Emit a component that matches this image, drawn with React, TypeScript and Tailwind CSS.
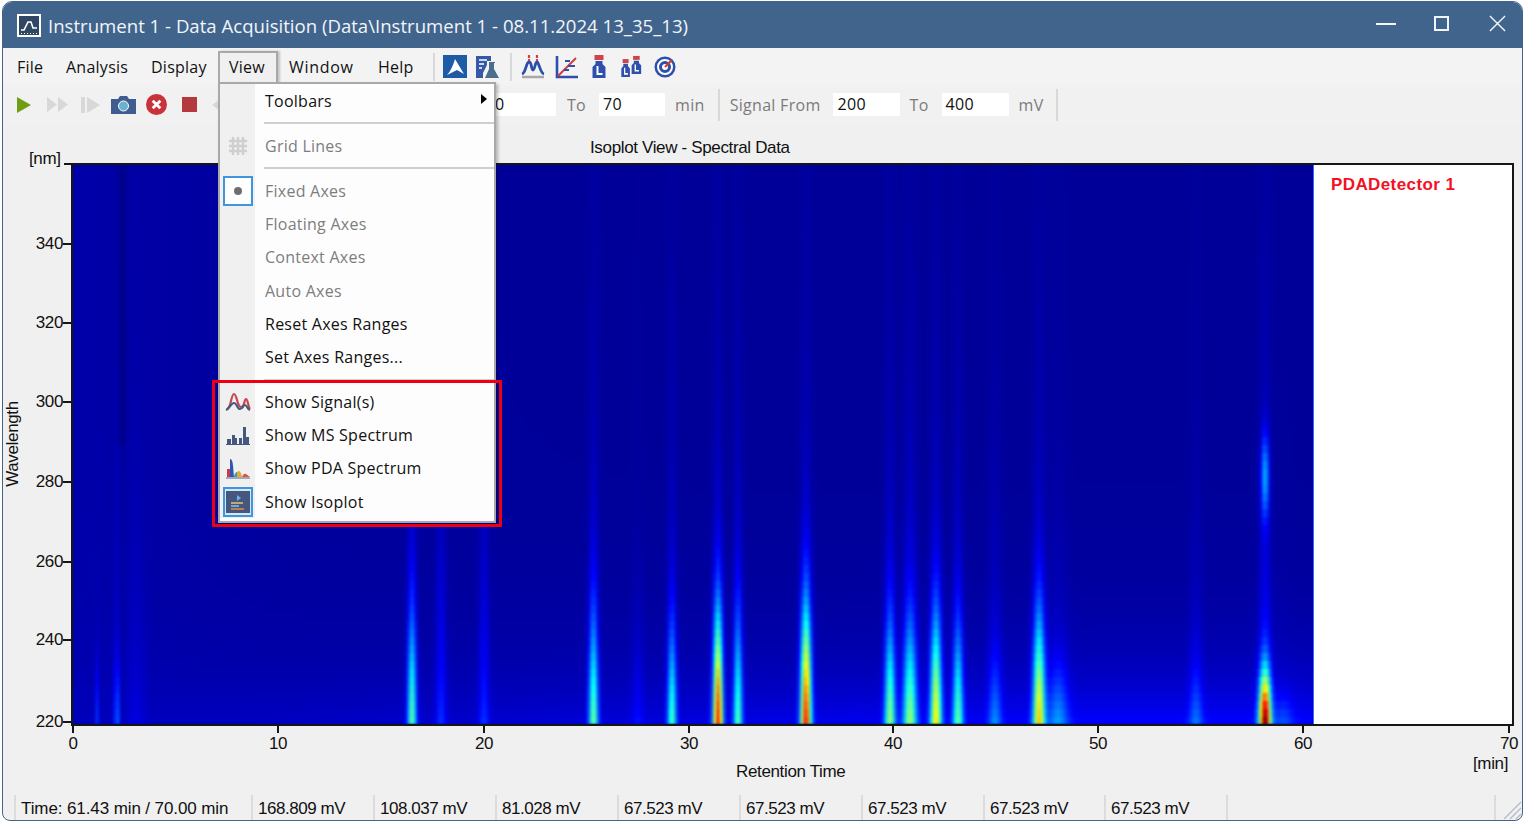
import { Fragment, type ReactNode } from "react";

// jet colour map, same as the isoplot uses
function jet(v: number) {
  const c = (n: number) => Math.round(Math.max(0, Math.min(1, n)) * 255);
  const r = c(Math.min(4 * v - 1.5, -4 * v + 4.5));
  const g = c(Math.min(4 * v - 0.5, -4 * v + 3.5));
  const b = c(Math.min(4 * v + 0.5, -4 * v + 2.5));
  return `rgb(${r},${g},${b})`;
}

const W = 1240;
const H = 559;
const ROW = 8;
const STEP = 3;

// x in page px, s = width, a = amplitude at 220 nm, h = vertical falloff, t = tail share
const peaks = [
  { x: 97, s: 1.2, a: 0.11, h: 60, t: 0.1 },
  { x: 117, s: 2, a: 0.17, h: 60, t: 0.3 },
  { x: 136, s: 7, a: 0.035, h: 200, t: 0.6 },
  { x: 412, s: 3, a: 0.41, h: 112, t: 0.3 },
  { x: 441, s: 3.5, a: 0.1, h: 200, t: 0.5 },
  { x: 484, s: 3.5, a: 0.1, h: 200, t: 0.6 },
  { x: 593.5, s: 3.2, a: 0.41, h: 112, t: 0.3 },
  { x: 638, s: 4, a: 0.05, h: 120, t: 0.3 },
  { x: 672, s: 3, a: 0.37, h: 96, t: 0.3 },
  { x: 718, s: 3.2, a: 0.78, h: 108, t: 0.17 },
  { x: 738, s: 3, a: 0.38, h: 110, t: 0.3 },
  { x: 806, s: 3.6, a: 0.78, h: 112, t: 0.17 },
  { x: 890, s: 3.6, a: 0.43, h: 100, t: 0.28 },
  { x: 910, s: 4.6, a: 0.43, h: 100, t: 0.28 },
  { x: 936, s: 3.8, a: 0.55, h: 106, t: 0.22 },
  { x: 958, s: 3.4, a: 0.38, h: 96, t: 0.28 },
  { x: 995, s: 4.5, a: 0.15, h: 70, t: 0.4 },
  { x: 1039, s: 4, a: 0.57, h: 106, t: 0.2 },
  { x: 1058, s: 7, a: 0.16, h: 60, t: 0.25 },
  { x: 1196, s: 4.5, a: 0.12, h: 60, t: 0.4 },
  { x: 1265, s: 4, a: 0.92, h: 50, t: 0.15 },
  { x: 1283, s: 7, a: 0.08, h: 30, t: 0.1 },
];

function intensity(px: number, y: number) {
  const d = H - y;
  const lr = Math.min(1, (px - 73) / 1000);
  let v = 0.024 + (0.02 + 0.085 * lr) * Math.exp(-d / 55);
  v += 0.018 * Math.exp(-(px - 73) / 170);
  // dark stripe at the start of the run
  v -= 0.03 * Math.exp(-((px - 122) ** 2) / 18) * (y > 280 ? 0.3 : 1);
  for (const p of peaks) {
    const g = Math.exp(-((px - p.x) ** 2) / (2 * p.s * p.s));
    if (g < 0.002) continue;
    v += p.a * g * ((1 - p.t) * Math.exp(-((d / p.h) ** 2)) + p.t * Math.exp(-d / 200));
  }
  // second band of the last peak, higher up
  const g2 = Math.exp(-((px - 1265) ** 2) / 14);
  v += 0.25 * g2 * Math.exp(-(((y + 166 - 478) / 42) ** 2));
  return v;
}

const rows = Array.from({ length: Math.ceil(H / ROW) }, (_, r) => {
  const y = r * ROW + ROW / 2;
  const stops = [];
  for (let i = 0; i <= W / STEP; i++) {
    stops.push({ o: (i * STEP) / W, c: jet(intensity(73 + i * STEP, y)) });
  }
  return { y: r * ROW, stops };
});

function Heatmap() {
  return (
    <svg width={W} height={H} viewBox={`0 0 ${W} ${H}`} className="block shrink-0 blur-[1px]">
      <defs>
        {rows.map((row, i) => (
          <linearGradient key={i} id={`iso${i}`}>
            {row.stops.map((s, j) => (
              <stop key={j} offset={s.o} stopColor={s.c} />
            ))}
          </linearGradient>
        ))}
      </defs>
      {rows.map((row, i) => (
        <rect key={i} x={0} y={row.y} width={W} height={ROW + 0.5} fill={`url(#iso${i})`} />
      ))}
    </svg>
  );
}

/* ---------- icons ---------- */

function AppIcon() {
  return (
    <svg width="24" height="23" viewBox="0 0 24 23">
      <rect x="1" y="1" width="22" height="21" fill="#2f4763" stroke="#fff" strokeWidth="2" />
      <path d="M4 17h3l4-8h3l2 6h4" transform="translate(0 -1)" fill="none" stroke="#fff" strokeWidth="1.6" />
      <path d="M4 19.5h16" stroke="#fff" strokeWidth="1" strokeDasharray="1 2" />
    </svg>
  );
}

function LogoTool() {
  return (
    <svg width="24" height="23" viewBox="0 0 24 23">
      <rect width="24" height="23" fill="#1d5ba6" />
      <path d="M12 4l9 15-7-4-10 5c3-3 6-9 8-16z" fill="#fff" />
    </svg>
  );
}

function FlaskTool() {
  return (
    <svg width="24" height="24" viewBox="0 0 24 24">
      <path d="M0 1h15v5h-4v4l-4 8v5H0z" fill="#3558a8" />
      <path d="M3 5h8M3 9h5M3 13h3" stroke="#fff" strokeWidth="1.6" />
      <path d="M13 7h6v1h-1v6l5 9H9l4-9V8z" fill="#4d6d8c" />
    </svg>
  );
}

function PeaksTool() {
  return (
    <svg width="24" height="25" viewBox="0 0 24 25">
      <path d="M1 20c4-1 4-12 7-12s2 8 4 8 2-8 4-8 3 11 7 12" fill="none" stroke="#2a4fa8" strokeWidth="2.8" />
      <path d="M8 1v3M8 5v2M16 1v3M16 5v2" stroke="#d0403f" strokeWidth="2.2" />
      <path d="M1 23h22" stroke="#a8a8a8" strokeWidth="2.5" />
    </svg>
  );
}

function AxesTool() {
  return (
    <svg width="24" height="24" viewBox="0 0 24 24">
      <path d="M2 1v21h21" fill="none" stroke="#2c50ab" strokeWidth="2.6" />
      <path d="M3 21L21 3" stroke="#d23b3b" strokeWidth="2" />
      <path d="M10 6h5M13 11h7M9 15h5" stroke="#2c50ab" strokeWidth="1.8" />
    </svg>
  );
}

function Bottle() {
  return (
    <g>
      <rect x="2.5" y="0" width="9" height="5" fill="#cf4349" />
      <path d="M3.5 6h7v3l3 3v11H.5V12l3-3z" fill="#2c50ab" />
      <path d="M5.5 11v8h5" fill="none" stroke="#fff" strokeWidth="2" />
    </g>
  );
}

function GaugeTool() {
  return (
    <svg width="22" height="22" viewBox="0 0 22 22">
      <circle cx="11" cy="11" r="10.5" fill="#2c50ab" />
      <circle cx="11" cy="11" r="7" fill="none" stroke="#fff" strokeWidth="2" />
      <circle cx="11" cy="11" r="3" fill="#fff" />
      <path d="M11 11l7-7" stroke="#d23b3b" strokeWidth="2.2" />
    </svg>
  );
}

function Sep({ className = "" }: { className?: string }) {
  return <div className={`w-[2px] bg-[#d8d8d8] ${className}`} />;
}

/* ---------- menu ---------- */

function MenuRow({
  label,
  disabled,
  icon,
  selected,
  arrow,
}: {
  label: string;
  disabled?: boolean;
  icon?: ReactNode;
  selected?: "plain" | "tint";
  arrow?: boolean;
}) {
  return (
    <div className="flex h-[33.2px] items-stretch">
      <div className="flex w-[35px] shrink-0 items-center justify-center bg-[#f0f0f0]">
        {selected ? (
          <div
            className={`flex h-[30px] w-[30px] items-center justify-center border-2 border-[#3f96dc] ${
              selected === "tint" ? "bg-[#d4e7f6]" : "bg-white"
            }`}
          >
            {icon}
          </div>
        ) : (
          icon
        )}
      </div>
      <div
        className={`flex flex-1 items-center justify-between pl-[10px] pr-[7px] ${
          disabled ? "text-[#7d7d7d]" : "text-[#111]"
        }`}
      >
        <span>{label}</span>
        {arrow && <span className="mb-[3px] h-0 w-0 border-y-[5.5px] border-l-[6px] border-y-transparent border-l-black" />}
      </div>
    </div>
  );
}

function MenuSep() {
  return (
    <div className="flex h-[12px] items-stretch">
      <div className="w-[35px] bg-[#f0f0f0]" />
      <div className="flex flex-1 items-center pl-[9px]">
        <div className="h-[2px] w-full bg-[#cfcfcf]" />
      </div>
    </div>
  );
}

function ViewMenu() {
  return (
    <div className="absolute left-[215px] top-[80px] z-20 w-[278px] border-2 border-[#a9a9a9] bg-[#fdfdfd] text-[16px] tracking-[0.25px] shadow-[2px_2px_3px_rgba(0,0,0,0.25)]">
      <MenuRow label="Toolbars" arrow />
      <MenuSep />
      <MenuRow
        label="Grid Lines"
        disabled
        icon={
          <svg width="20" height="20" viewBox="0 0 20 20">
            <path d="M5 1v18M10 1v18M15 1v18M1 5h18M1 10h18M1 15h18" stroke="#cfcfcf" strokeWidth="2.4" />
          </svg>
        }
      />
      <MenuSep />
      <MenuRow
        label="Fixed Axes"
        disabled
        selected="plain"
        icon={<span className="h-[8px] w-[8px] rounded-full bg-[#6e6e6e]" />}
      />
      <MenuRow label="Floating Axes" disabled />
      <MenuRow label="Context Axes" disabled />
      <MenuRow label="Auto Axes" disabled />
      <MenuRow label="Reset Axes Ranges" />
      <MenuRow label="Set Axes Ranges..." />
      <MenuSep />
      <MenuRow
        label="Show Signal(s)"
        icon={
          <svg width="26" height="22" viewBox="0 0 26 22">
            <path d="M2 18c4 0 4-15 7-15s3 13 7 13 3-8 5-8 2 8 4 10" fill="none" stroke="#c9454c" strokeWidth="2.2" />
            <path d="M1 19c3-1 5-7 8-7s3 6 6 6 3-4 5-4 2 4 5 5" fill="none" stroke="#45597f" strokeWidth="2.2" />
          </svg>
        }
      />
      <MenuRow
        label="Show MS Spectrum"
        icon={
          <svg width="26" height="22" viewBox="0 0 26 22">
            <path d="M1 21h24v-1H1zM2 20v-5h4v5zM7 20V11h3v3h2v6zM14 20v-6h3v6zM18 20V3h3v10h3v7z" fill="#46577f" />
          </svg>
        }
      />
      <MenuRow
        label="Show PDA Spectrum"
        icon={
          <svg width="26" height="22" viewBox="0 0 26 22">
            <path d="M2 20V12h3v8z" fill="#c93a4a" />
            <path d="M5 20V2c3 0 3 6 4 18z" fill="#2f55b8" />
            <path d="M9 20c0-3 2-5 3-5v5z" fill="#2ea3a8" />
            <path d="M12 20v-5c2-2 4-1 5 5z" fill="#e2a93a" />
            <path d="M17 20c1-3 3-4 4-3l4 3z" fill="#d85a3a" />
            <path d="M1 21h24" stroke="#8a8fb0" strokeWidth="1.5" />
          </svg>
        }
      />
      <MenuRow
        label="Show Isoplot"
        selected="tint"
        icon={
          <svg width="24" height="22" viewBox="0 0 24 22">
            <rect width="24" height="22" fill="#45577f" />
            <path d="M11 4l4 3-4 3z" fill="#6db4e8" />
            <path d="M5 12h12" stroke="#e8c66c" strokeWidth="1.5" />
            <path d="M5 15h8" stroke="#7cc7e8" strokeWidth="1.5" />
            <path d="M5 18h13" stroke="#e88a4a" strokeWidth="1.5" />
          </svg>
        }
      />
      <div className="h-[3px]" />
    </div>
  );
}

/* ---------- plot ---------- */

const yTicks = [
  { label: "340", y: 79 },
  { label: "320", y: 158 },
  { label: "300", y: 237 },
  { label: "280", y: 317 },
  { label: "260", y: 397 },
  { label: "240", y: 475 },
  { label: "220", y: 557 },
];

const xTicks = [
  { label: "0", x: 0 },
  { label: "10", x: 205 },
  { label: "20", x: 411 },
  { label: "30", x: 616 },
  { label: "40", x: 820 },
  { label: "50", x: 1025 },
  { label: "60", x: 1230 },
  { label: "70", x: 1436 },
];

function Plot() {
  return (
    <div className="relative min-h-0 flex-1 pb-[69px] pl-[68px] pr-[8px] pt-[39px] text-[17px] tracking-[-0.35px] text-[#111] font-['Liberation_Sans',sans-serif]">
      <div className="absolute left-[26px] top-[22px]">[nm]</div>
      <div className="absolute left-[587px] top-[11px]">Isoplot View - Spectral Data</div>
      <div className="relative flex h-full border-2 border-[#161616] bg-white">
        <div className="absolute right-full top-[-2px] h-[2px] w-[9px] bg-[#161616]" />
        <div className="overflow-hidden bg-[#00009a]">
          <Heatmap />
        </div>
        <div className="w-[1px] bg-[#3f62ff]" />
        <div className="flex-1 pl-[17px] pt-[7px] text-[17px] font-bold tracking-[0.4px] text-[#f5101f]">PDADetector 1</div>
        {yTicks.map((t) => (
          <Fragment key={t.label}>
            <div className="absolute right-full h-[2px] w-[10px] bg-[#161616]" style={{ top: t.y - 1 }} />
            <div className="absolute right-[calc(100%+10px)] leading-[18px]" style={{ top: t.y - 9 }}>
              {t.label}
            </div>
          </Fragment>
        ))}
        {xTicks.map((t) => (
          <Fragment key={t.label}>
            <div className="absolute top-full h-[9px] w-[2px] bg-[#161616]" style={{ left: t.x - 1 }} />
            <div className="absolute top-[calc(100%+11px)] w-[40px] text-center leading-[18px]" style={{ left: t.x - 20 }}>
              {t.label}
            </div>
          </Fragment>
        ))}
      </div>
      <div className="absolute left-[10px] top-[320px] -translate-x-1/2 -translate-y-1/2 -rotate-90 leading-[18px]">Wavelength</div>
      <div className="absolute left-[733px] top-[639px] leading-[18px]">Retention Time</div>
      <div className="absolute left-[1470px] top-[631px] leading-[18px]">[min]</div>
    </div>
  );
}

const statusCells = [
  { text: "Time: 61.43 min / 70.00 min", w: "w-[237px] tracking-[-0.1px]" },
  { text: "168.809 mV", w: "w-[122px] tracking-[-0.45px]" },
  { text: "108.037 mV", w: "w-[122px] tracking-[-0.45px]" },
  { text: "81.028 mV", w: "w-[122px] tracking-[-0.45px]" },
  { text: "67.523 mV", w: "w-[122px] tracking-[-0.45px]" },
  { text: "67.523 mV", w: "w-[122px] tracking-[-0.45px]" },
  { text: "67.523 mV", w: "w-[122px] tracking-[-0.45px]" },
  { text: "67.523 mV", w: "w-[121px] tracking-[-0.45px]" },
  { text: "67.523 mV", w: "w-[122px] tracking-[-0.45px]" },
];

export default function App() {
  return (
    <div className="h-[825px] w-[1524px] bg-white pb-[4px] pl-[2px] pr-[1px] pt-[1px] font-['Open_Sans',sans-serif]">
      <div className="relative flex h-full flex-col overflow-hidden rounded-b-[8px] rounded-t-[10px] border border-[#41648d] bg-[#f0f0f0]">
        {/* title bar */}
        <div className="flex h-[46px] shrink-0 items-center bg-[#41648d] pl-[14px] text-[18.6px] text-[#f2f5f8]">
          <AppIcon />
          <span className="ml-[7px] mt-[1px]">Instrument 1 - Data Acquisition (Data\Instrument 1 - 08.11.2024 13_35_13)</span>
          <div className="mb-[3px] ml-auto flex items-center">
            <div className="h-[2px] w-[20px] bg-[#f2f5f8]" />
            <div className="ml-[38px] h-[15px] w-[15px] border-2 border-[#f2f5f8]" />
            <svg className="ml-[40px] mr-[16px]" width="17" height="17" viewBox="0 0 18 18">
              <path d="M1 1l16 16M17 1L1 17" stroke="#f2f5f8" strokeWidth="1.5" />
            </svg>
          </div>
        </div>

        {/* menu bar */}
        <div className="flex h-[37px] shrink-0 items-center bg-[#f3f3f3] pl-[14px] text-[16px] tracking-[0.25px] text-[#111]">
          <div className="w-[49px]">File</div>
          <div className="w-[85px]">Analysis</div>
          <div className="w-[67px]">Display</div>
          <div className="z-10 h-[34px] w-[60px] self-end border-2 border-b-0 border-[#a9a9a9] bg-[#f0f0f0] pl-[9px] leading-[28px] shadow-[2px_0_2px_rgba(0,0,0,0.2)]">
            View
          </div>
          <div className="ml-[11px] w-[89px] tracking-[0.7px]">Window</div>
          <div className="w-[55px]">Help</div>
          <Sep className="h-[28px]" />
          <div className="ml-[8px] flex items-center">
            <LogoTool />
            <div className="ml-[9px]">
              <FlaskTool />
            </div>
            <Sep className="ml-[10px] h-[28px]" />
            <div className="ml-[9px]">
              <PeaksTool />
            </div>
            <div className="ml-[10px]">
              <AxesTool />
            </div>
            <svg className="ml-[13px]" width="14" height="23" viewBox="0 0 14 23">
              <Bottle />
            </svg>
            <svg className="ml-[15px]" width="22" height="23" viewBox="0 0 24 23">
              <g transform="scale(0.72 0.85) translate(0 4)">
                <Bottle />
              </g>
              <g transform="scale(0.8 0.85) translate(14 0)">
                <Bottle />
              </g>
            </svg>
            <div className="ml-[11px]">
              <GaugeTool />
            </div>
          </div>
        </div>

        {/* tool bar */}
        <div className="flex h-[39px] shrink-0 items-center bg-[#f1f1f1] pl-[14px] text-[16px] tracking-[0.3px] text-[#7b7b7b]">
          <svg width="14" height="16" viewBox="0 0 14 16">
            <path d="M0 0l14 8L0 16z" fill="#6f9e12" />
          </svg>
          <svg className="ml-[16px]" width="21" height="15" viewBox="0 0 21 15">
            <path d="M0 0l10 7.5L0 15zM11 0l10 7.5L11 15z" fill="#d8d8d8" />
          </svg>
          <svg className="ml-[13px]" width="20" height="16" viewBox="0 0 20 16">
            <path d="M0 0h4v16H0zM6 0l13 8L6 16z" fill="#d8d8d8" />
          </svg>
          <svg className="ml-[10px]" width="25" height="19" viewBox="0 0 25 19">
            <path d="M0 4h7l2-3h7l2 3h7v15H0z" fill="#3f5d8f" />
            <circle cx="12.5" cy="11" r="5" fill="#6bb3cc" stroke="#fff" strokeWidth="1" />
          </svg>
          <svg className="ml-[10px]" width="21" height="21" viewBox="0 0 22 22">
            <circle cx="11" cy="11" r="11" fill="#c8323a" />
            <path d="M7 7l8 8M15 7l-8 8" stroke="#fff" strokeWidth="3" />
          </svg>
          <div className="ml-[15px] h-[15px] w-[15px] bg-[#b5383f]" />
          <svg className="ml-[15px]" width="8" height="12" viewBox="0 0 8 12">
            <path d="M0 6l8-6v12z" fill="#d8d8d8" />
          </svg>
          <div className="ml-[270px] h-[23px] w-[66px] bg-white pl-[5px] leading-[23px] text-[#111]">0</div>
          <span className="ml-[11px]">To</span>
          <div className="ml-[13px] h-[23px] w-[66px] bg-white pl-[4px] leading-[23px] text-[#111]">70</div>
          <span className="ml-[10px]">min</span>
          <Sep className="ml-[13px] h-[32px]" />
          <span className="ml-[10px]">Signal From</span>
          <div className="ml-[12px] h-[23px] w-[67px] bg-white pl-[5px] leading-[23px] text-[#111]">200</div>
          <span className="ml-[10px]">To</span>
          <div className="ml-[13px] h-[23px] w-[67px] bg-white pl-[4px] leading-[23px] text-[#111]">400</div>
          <span className="ml-[10px]">mV</span>
          <Sep className="ml-[12px] h-[32px]" />
        </div>

        <Plot />

        {/* status bar */}
        <div className="flex h-[25px] shrink-0 items-center pl-[11px] text-[17px] text-[#111] font-['Liberation_Sans',sans-serif]">
          {statusCells.map((c, i) => (
            <div key={i} className={`${c.w} flex h-full items-center border-l-2 border-[#dcdcdc] pl-[5px] pt-[2px]`}>
              {c.text}
            </div>
          ))}
          <div className="h-full w-[270px] border-l-2 border-r-2 border-[#dcdcdc]" />
          <svg className="ml-auto self-end" width="24" height="24" viewBox="0 0 24 24">
            <path d="M23 6L6 23M23 12L12 23M23 18L18 23" stroke="#b4bcc6" strokeWidth="1.4" />
          </svg>
        </div>

        <ViewMenu />
        {/* highlight round the last menu group */}
        <div className="absolute left-[209px] top-[378px] z-30 h-[147px] w-[290px] border-[3px] border-[#ee0011]" />
      </div>
    </div>
  );
}
